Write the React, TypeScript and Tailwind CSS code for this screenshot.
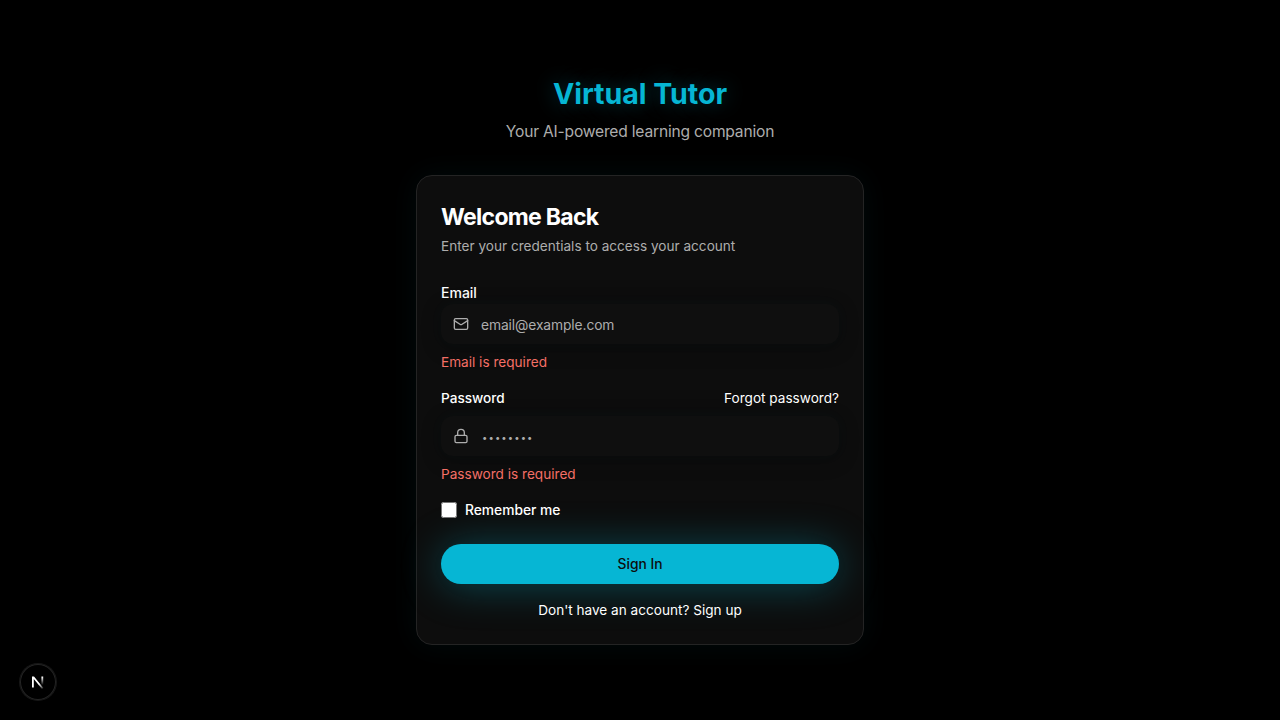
import { Lock, Mail } from "lucide-react";
import type { ReactNode } from "react";

const inputClass =
  "block h-10 w-full rounded-xl bg-[#0f0f0f] pl-10 pr-3 text-[13.8px] tracking-[-0.1px] text-white placeholder:text-[#adadad] shadow-[0_4px_20px_rgba(0,0,0,0.25),0_0_15px_rgba(6,182,212,0.03)] outline-none";

function Field({ icon, children }: { icon: ReactNode; children: ReactNode }) {
  return (
    <div className="relative">
      {children}
      <span className="pointer-events-none absolute left-3 top-3 text-[#adadad]">{icon}</span>
    </div>
  );
}

export default function App() {
  return (
    <div className="relative flex min-h-screen items-center justify-center bg-black font-[Inter,sans-serif] text-white antialiased">
      <main className="w-[448px]">
        <div className="mb-8 text-center">
          <h1 className="pt-px -mb-px text-[28.6px]/9 font-bold tracking-[-0.05px] text-[#06b6d4] [text-shadow:0_0_20px_rgba(6,182,212,0.35)]">
            Virtual Tutor
          </h1>
          <p className="mt-2 pt-px -mb-px text-[15.6px]/6 tracking-[-0.2px] text-[#adadad]">
            Your AI-powered learning companion
          </p>
        </div>

        <section className="rounded-2xl border border-[#242424] bg-[#0d0d0d] p-6 shadow-[0_0_30px_rgba(6,182,212,0.06)]">
          <h2 className="pt-px -mb-px text-[23px]/8 font-bold tracking-[-0.7px]">Welcome Back</h2>
          <p className="mt-1 text-[13.6px]/5 text-[#adadad]">Enter your credentials to access your account</p>

          <form className="mt-6" onSubmit={(e) => e.preventDefault()}>
            <div className="h-6">
              <label htmlFor="email" className="text-sm font-medium">
                Email
              </label>
            </div>
            <Field icon={<Mail size={16} />}>
              <input
                id="email"
                type="email"
                placeholder="email@example.com"
                className={`${inputClass} pt-0.5`}
              />
            </Field>
            <p className="mt-2 text-[13.6px]/5 text-[#f87168]">Email is required</p>

            <div className="mt-4 mb-2 flex items-center justify-between text-[13.6px]/5">
              <label htmlFor="password" className="font-medium">
                Password
              </label>
              <a href="#">Forgot password?</a>
            </div>
            <Field icon={<Lock size={16} />}>
              <input
                id="password"
                type="password"
                placeholder="••••••••"
                className={`${inputClass} pb-px pl-[41px] placeholder:text-[9.5px] placeholder:tracking-[1.1px]`}
              />
            </Field>
            <p className="mt-2 text-[13.6px]/5 text-[#f87168]">Password is required</p>

            <div className="mt-4 flex h-5 items-center gap-2">
              <input id="remember" type="checkbox" className="size-4" />
              <label htmlFor="remember" className="text-[13.8px]/5 font-medium">
                Remember me
              </label>
            </div>

            <button
              type="submit"
              className="mt-6 block h-10 w-full rounded-full bg-[#06b6d4] text-[13.8px]/5 font-medium text-[#0d0d0d] shadow-[0_2px_40px_rgba(6,182,212,0.35)]"
            >
              Sign In
            </button>
          </form>

          <p className="mt-4 text-center text-[13.6px]/5">
            Don't have an account? <a href="#">Sign up</a>
          </p>
        </section>
      </main>

      <div className="absolute bottom-5 left-5 flex size-9 items-center justify-center rounded-full bg-black shadow-[0_0_0_1px_#171717,inset_0_0_0_1px_#242424]">
        <svg width="14" height="14" viewBox="0 0 14 14" fill="none">
          <defs>
            <linearGradient id="diagonal" x1="8" y1="9" x2="12.5" y2="14.5" gradientUnits="userSpaceOnUse">
              <stop stopColor="white" />
              <stop offset="1" stopColor="white" stopOpacity="0" />
            </linearGradient>
            <linearGradient id="stem" x1="11" y1="2" x2="11" y2="10" gradientUnits="userSpaceOnUse">
              <stop stopColor="white" />
              <stop offset="1" stopColor="white" stopOpacity="0" />
            </linearGradient>
          </defs>
          <path d="M1 12.5V1.5H3L12.4 13L11 14L2.8 4V12.5Z" fill="url(#diagonal)" />
          <path d="M11.3 1.5V10" stroke="url(#stem)" strokeWidth="1.8" />
        </svg>
      </div>
    </div>
  );
}
